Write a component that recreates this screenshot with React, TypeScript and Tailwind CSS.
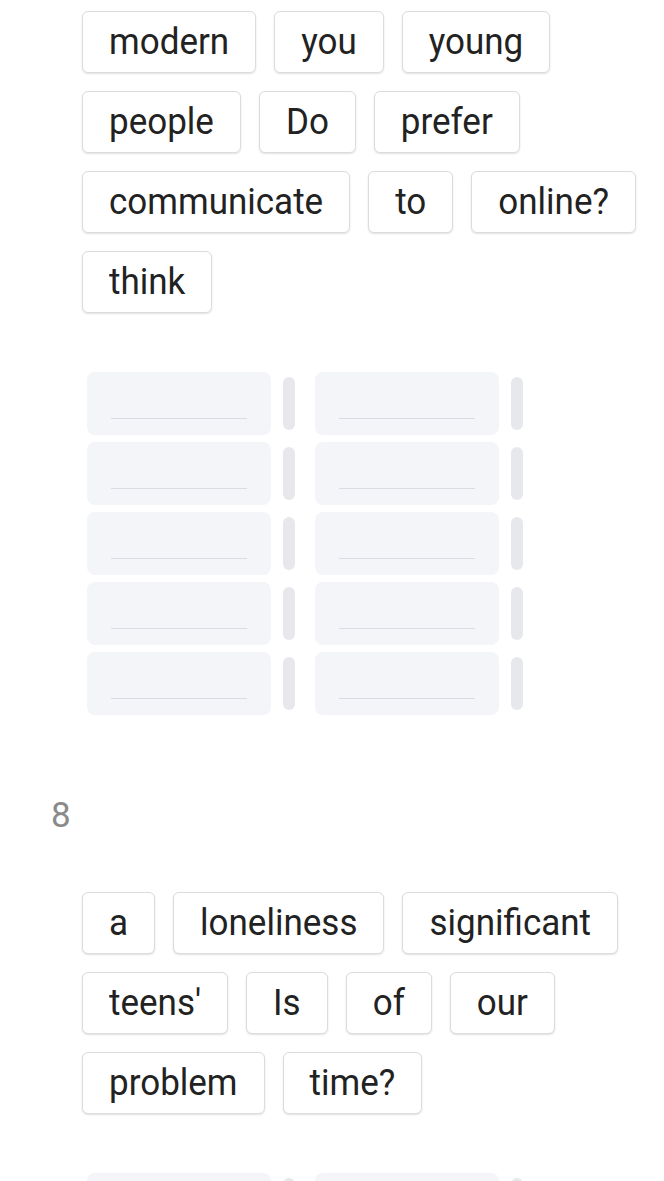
import React from "react";

const groupA = ["modern", "you", "young", "people", "Do", "prefer", "communicate", "to", "online?", "think"];
const groupB = ["a", "loneliness", "significant", "teens'", "Is", "of", "our", "problem", "time?"];

function Chips({ words }: { words: string[] }) {
  return (
    <div className="flex flex-wrap gap-[18px] pl-[82px] pr-[20px]">
      {words.map((w, i) => (
        <div
          key={i}
          className="h-[62px] px-[26px] border border-[#dcdcdc] rounded-[6px] bg-white text-[35px] leading-[60px] text-[#222222] shadow-[0_1px_2px_rgba(0,0,0,0.12)]"
        >
          <span className="inline-block scale-y-[1.08]">{w}</span>
        </div>
      ))}
    </div>
  );
}

function Slot() {
  return (
    <div className="flex items-center">
      <div className="w-[184px] h-[63px] rounded-[8px] bg-[#f4f5f9] flex items-end px-[24px] pb-[16px]">
        <div className="h-[1px] w-full bg-[#d9dce2]" />
      </div>
      <div className="ml-[12px] w-[12px] h-[53px] rounded-full bg-[#e6e8ec]" />
    </div>
  );
}

function Slots({ rows }: { rows: number }) {
  return (
    <div className="pl-[87px] flex flex-col gap-[7px]">
      {Array.from({ length: rows }).map((_, r) => (
        <div key={r} className="flex gap-[20px]">
          <Slot />
          <Slot />
        </div>
      ))}
    </div>
  );
}

export default function App() {
  return (
    <div className="bg-white min-h-screen overflow-hidden font-['Roboto',sans-serif] pt-[11px]">
      <Chips words={groupA} />
      <div className="mt-[59px]">
        <Slots rows={5} />
      </div>
      <div className="mt-[83px] pl-[51px] text-[35px] leading-none text-[#8a8a8a]">8</div>
      <div className="mt-[59px]">
        <Chips words={groupB} />
      </div>
      <div className="mt-[59px]">
        <Slots rows={5} />
      </div>
    </div>
  );
}
